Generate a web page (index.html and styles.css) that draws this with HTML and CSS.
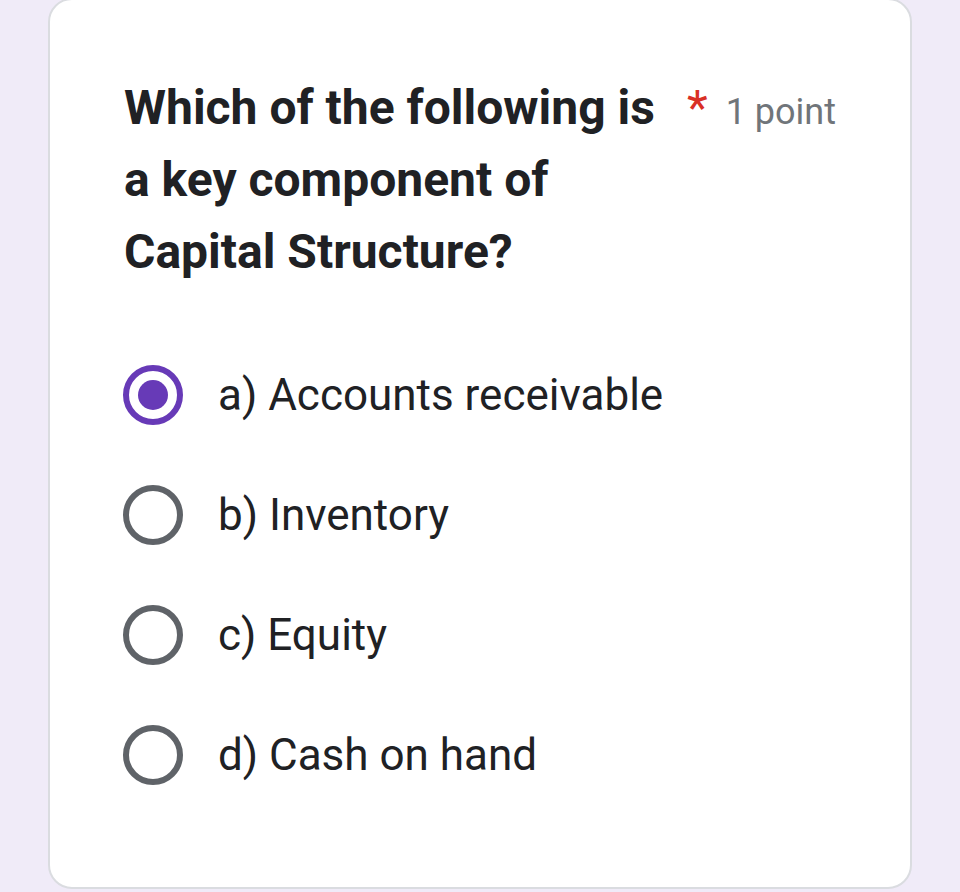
FILE: index.html
```html
<!DOCTYPE html>
<html lang="en">
<head>
<meta charset="utf-8">
<title>Question</title>
<link rel="stylesheet" href="styles.css">
</head>
<body>
<div class="card">
  <div class="header">
    <div class="title">Which of the following is a key component of Capital Structure?</div>
    <span class="required">*</span>
    <span class="points">1 point</span>
  </div>
  <div class="options">
    <label class="option">
      <span class="radio checked"><span class="dot"></span></span>
      <span class="label">a) Accounts receivable</span>
    </label>
    <label class="option">
      <span class="radio"></span>
      <span class="label">b) Inventory</span>
    </label>
    <label class="option">
      <span class="radio"></span>
      <span class="label">c) Equity</span>
    </label>
    <label class="option">
      <span class="radio"></span>
      <span class="label">d) Cash on hand</span>
    </label>
  </div>
</div>
</body>
</html>
```

FILE: styles.css
```css
html, body {
  margin: 0;
  padding: 0;
  background: #f0ebf8;
  height: 100%;
  overflow: hidden;
}
body {
  font-family: Roboto, "Liberation Sans", sans-serif;
  color: #202124;
}
.card {
  box-sizing: border-box;
  margin: -2px 48px 0 48px;
  height: 891px;
  background: #ffffff;
  border: 2px solid #dadce0;
  border-radius: 24px;
  padding: 72px 74px 72px 74px;
}
.header {
  display: flex;
  align-items: baseline;
}
.title {
  flex: 1;
  font-size: 48px;
  line-height: 72px;
  font-weight: 700;
  padding-right: 10px;
}
.required {
  color: #d93025;
  font-size: 48px;
  line-height: 72px;
  margin-right: 18px;
}
.points {
  color: #70757a;
  font-size: 36px;
  line-height: 72px;
}
.options {
  margin-top: 47px;
  display: flex;
  flex-direction: column;
}
.option {
  height: 120px;
  display: flex;
  align-items: center;
}
.radio {
  box-sizing: border-box;
  width: 60px;
  height: 60px;
  border: 6px solid #5f6368;
  border-radius: 50%;
  margin-left: -1px;
  margin-right: 35px;
  display: flex;
  align-items: center;
  justify-content: center;
  flex: none;
}
.radio.checked {
  border-color: #673ab7;
}
.dot {
  width: 30px;
  height: 30px;
  border-radius: 50%;
  background: #673ab7;
}
.label {
  font-size: 44px;
  line-height: 60px;
}
```
